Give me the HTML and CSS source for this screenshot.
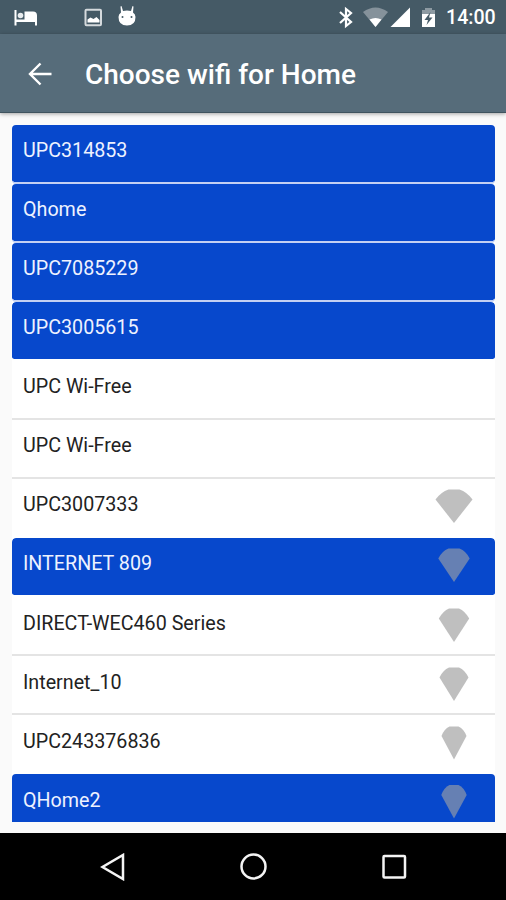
FILE: index.html
```html
<!DOCTYPE html>
<html lang="en">
<head>
<meta charset="utf-8">
<title>Choose wifi for Home</title>
<link rel="stylesheet" href="styles.css">
</head>
<body>
<header class="status">
  <svg class="status-left" width="150" height="34" viewBox="0 0 150 34">
    <path fill="#fff" d="M14.500 10h2v9.500h8v-8h8.500q4 0 4 4v10h-2v-3.500H16.500v3.500h-2z"/>
    <circle cx="20.500" cy="15.500" r="2.800" fill="#e8ecee"/>
    <rect x="85.500" y="9.800" width="15.500" height="15.500" rx="1" fill="none" stroke="#d5dadd" stroke-width="2"/>
    <path fill="#fff" d="M87.500 22.500v-3l3-2 3 1.500 3-2 3 3v2.500z"/>
    <path fill="#fff" d="M121.500 6l1.500 5q4-1 8 0l1.500-5 1 .5-.5 6q2.500 1.500 2.500 4.500 0 8.500-8.500 8.500T118.500 17q0-3 2.500-4.500l-.5-6z"/>
    <circle cx="122.500" cy="17" r="1" fill="#455a66"/><circle cx="131.500" cy="17" r="1" fill="#455a66"/>
  </svg>
  <div class="status-right">
    <svg width="104" height="34" viewBox="336 0 104 34">
      <path fill="none" stroke="#fff" stroke-width="2.200" d="M340 12l11 10-5 4V9l5 4-11 10"/>
      <path fill="#85929b" d="M363 12q12.500-9 25 0L375.500 27z"/>
      <path fill="#fff" d="M369.500 19.500q6-3 12 0l-6 7.500z"/>
      <path fill="#fff" d="M410 7.500V27h-19.500z"/>
      <path fill="#8d9aa2" d="M422 10h3V8h7v2h3v5h-13z"/>
      <path fill="#fff" d="M422 14h13v13h-13z"/>
      <path fill="#455a66" d="M430.500 12l-6 8h3.500l-1.500 5 6-7.500H429z"/>
    </svg>
    <span class="clock">14:00</span>
  </div>
</header>
<div class="appbar">
  <svg class="back" width="24" height="24" viewBox="0 0 24 24"><path fill="none" stroke="#fff" stroke-width="2.400" d="M12.500 1.500L2 12l10.500 10.500M2 12h21.500"/></svg>
  <h1>Choose wifi for Home</h1>
</div>
<main>
  <ul class="networks">
    <li class="known">UPC314853</li>
    <li class="known">Qhome</li>
    <li class="known">UPC7085229</li>
    <li class="known">UPC3005615</li>
    <li>UPC Wi-Free</li>
    <li>UPC Wi-Free</li>
    <li>UPC3007333<svg class="signal" viewBox="0 0 40 34"><path d="M1.500 10.500Q7 3 14.500 0.500H25.500Q33 3 38.500 10.500L20 34z"/></svg></li>
    <li class="known">INTERNET 809<svg class="signal" viewBox="0 0 40 34"><path d="M4.300 10.500Q8 3 14.500 0.500H25.500Q32 3 35.700 10.500L20 34z"/></svg></li>
    <li>DIRECT-WEC460 Series<svg class="signal" viewBox="0 0 40 34"><path d="M4.800 10.500Q9 3 15 0.500H25Q31 3 35.200 10.500L20 34z"/></svg></li>
    <li>Internet_10<svg class="signal" viewBox="0 0 40 34"><path d="M5.500 10.500Q9 3 15 0.500H25Q31 3 34.500 10.500L20 34z"/></svg></li>
    <li>UPC243376836<svg class="signal" viewBox="0 0 40 34"><path d="M7.500 10Q10 3 15.500 0.500H24.500Q30 3 32.500 10L20 33.500z"/></svg></li>
    <li class="known">QHome2<svg class="signal" viewBox="0 0 40 34"><path d="M7.300 10Q10 2.500 15.500 0H24.500Q30 2.500 32.700 10L20 33.500z"/></svg></li>
  </ul>
</main>
<nav class="navbar">
  <svg width="28" height="28" viewBox="0 0 28 28"><path d="M24 2v24L3.500 14z"/></svg>
  <svg width="28" height="28" viewBox="0 0 28 28"><circle cx="14.500" cy="13.500" r="12"/></svg>
  <svg width="28" height="28" viewBox="0 0 28 28"><rect x="3.500" y="3" width="21.500" height="21.500" rx="1"/></svg>
</nav>
</body>
</html>
```
FILE: styles.css
```css
* { box-sizing: border-box; }
body {
  margin: 0;
  width: 506px;
  height: 900px;
  display: flex;
  flex-direction: column;
  overflow: hidden;
  background: #fafafa;
  font-family: Roboto, sans-serif;
}
svg { display: block; flex: none; }
.status {
  height: 34px;
  flex: none;
  display: flex;
  justify-content: space-between;
  background: #455a66;
}
.status-right {
  display: flex;
  align-items: center;
  padding-right: 10px;
}
.clock {
  width: 50px;
  margin-left: 6px;
  padding-top: 2px;
  color: #fff;
  font-size: 19.6px;
  font-weight: 500;
  line-height: 34px;
  white-space: nowrap;
}
.appbar {
  height: 79px;
  flex: none;
  display: flex;
  align-items: center;
  gap: 33px;
  padding: 2px 0 0 28px;
  background: #566c7a;
  border-bottom: 1px solid #40545f;
  box-shadow: 0 1px 4px rgba(0, 0, 0, .35);
}
h1 {
  margin: 0;
  padding-top: 1px;
  color: #fff;
  font-size: 28px;
  font-weight: 500;
  line-height: 36px;
  white-space: nowrap;
}
main {
  height: 720px;
  flex: none;
  padding: 11.5px 11px 0 12px;
}
.networks {
  height: 697px;
  margin: 0;
  padding: 0;
  overflow: hidden;
  list-style: none;
  background: #fff;
}
li {
  display: flex;
  justify-content: space-between;
  height: 59.07px;
  padding: 10.500px 21.500px 0 11px;
  border-bottom: 2px solid #e4e4e4;
  color: #222;
  font-size: 19.700px;
  line-height: 32px;
}
li.known {
  background: #0748cc;
  background-clip: padding-box;
  border-radius: 4px;
  border-bottom-color: #c3d0f3;
  color: #eef2ff;
}
li:not(.known):has(+ .known), li.known:has(+ :not(.known)) { border-bottom-color: transparent; }
.signal {
  width: 40px;
  height: 34px;
  fill: #bfbfbf;
}
.known .signal { fill: #6680b3; }
.navbar {
  flex: 1;
  display: flex;
  justify-content: center;
  gap: 112.500px;
  padding-top: 20px;
  background: #000;
}
.navbar svg { fill: none; stroke: #f4f4f4; stroke-width: 2.500; }
```
